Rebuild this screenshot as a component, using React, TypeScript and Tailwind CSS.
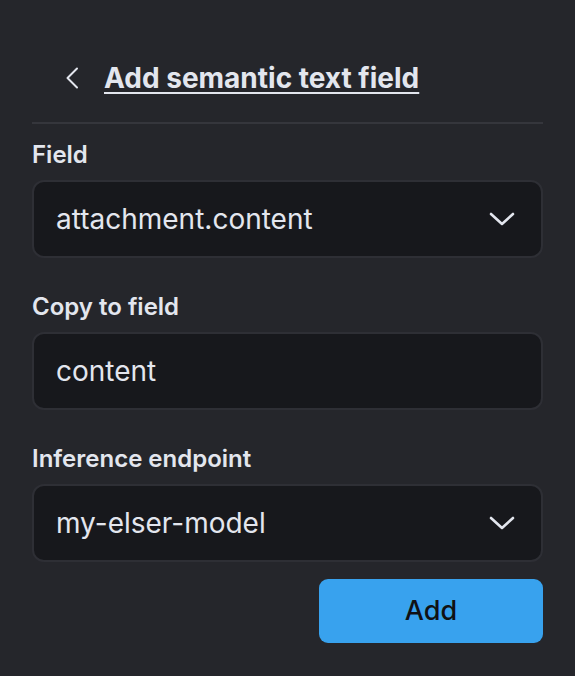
import React from "react";

function Chevron() {
  return (
    <svg width="26" height="14" viewBox="0 0 26 14" fill="none" className="shrink-0">
      <path d="M2 2 L13 12 L24 2" stroke="#e3e6ee" strokeWidth="2.6" strokeLinecap="round" strokeLinejoin="round" />
    </svg>
  );
}

function Box({ value, select }: { value: string; select?: boolean }) {
  return (
    <div className="flex h-[78px] items-center justify-between rounded-[12px] border-2 border-[#2e2f35] bg-[#17181c] pl-[22px] pr-[26px]">
      <span className="text-[28px] leading-[34px] text-[#e3e6ee]">{value}</span>
      {select && <Chevron />}
    </div>
  );
}

function Label({ children, className = "" }: { children: React.ReactNode; className?: string }) {
  return (
    <div className={`text-[24px] leading-[28px] font-semibold text-[#e3e6ee] ${className}`}>{children}</div>
  );
}

export default function App() {
  return (
    <div
      className="w-[575px] h-[676px] bg-[#25262b] px-8"
      style={{ fontFamily: "Inter, 'Noto Sans', sans-serif" }}
    >
      <div className="flex h-[122px] items-center gap-[24px] pl-[32px] pt-[34px]">
        <svg width="16" height="22" viewBox="0 0 16 22" fill="none" className="shrink-0">
          <path d="M13 1.5 L3.5 11 L13 20.5" stroke="#e3e6ee" strokeWidth="2" strokeLinecap="round" strokeLinejoin="round" />
        </svg>
        <span className="text-[28px] leading-[34px] font-bold text-[#e3e6ee] underline decoration-2 underline-offset-[4px]">
          Add semantic text field
        </span>
      </div>
      <div className="h-[2px] bg-[#35363c]" />
      <Label className="mt-[17px]">Field</Label>
      <div className="mt-[11px]">
        <Box value="attachment.content" select />
      </div>
      <Label className="mt-[35px]">Copy to field</Label>
      <div className="mt-[11px]">
        <Box value="content" />
      </div>
      <Label className="mt-[35px]">Inference endpoint</Label>
      <div className="mt-[11px]">
        <Box value="my-elser-model" select />
      </div>
      <div className="mt-[17px] flex justify-end">
        <button className="h-[64px] w-[224px] rounded-[9px] bg-[#38a2ee] text-[27px] font-medium text-[#101114]">
          Add
        </button>
      </div>
    </div>
  );
}
